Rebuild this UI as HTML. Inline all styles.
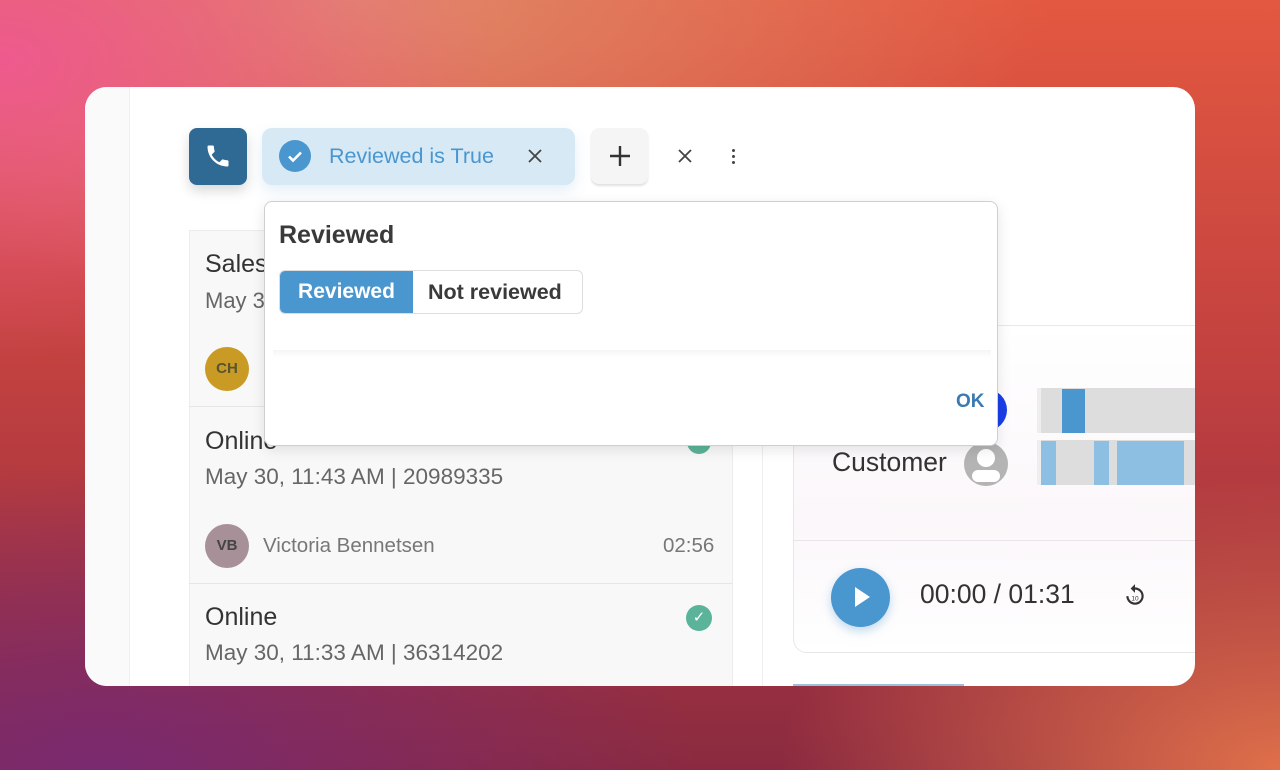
<!DOCTYPE html>
<html><head><style>
*{margin:0;padding:0;box-sizing:border-box}
body{width:1280px;height:770px;overflow:hidden;font-family:"Liberation Sans",sans-serif;position:relative;
background:radial-gradient(ellipse 500px 300px at 0px 60px,#ee5a8e 0%,rgba(238,90,142,0) 100%),
radial-gradient(ellipse 700px 300px at 350px 0px,#e08a6a 0%,rgba(224,138,106,0) 100%),
radial-gradient(ellipse 600px 300px at 100px 770px,#7a2a70 0%,rgba(122,42,112,0) 100%),
radial-gradient(ellipse 500px 300px at 1280px 770px,#e0704a 0%,rgba(224,112,74,0) 100%),
linear-gradient(180deg,#e35840 0%,#c04040 50%,#8a2a40 100%);}
.a{position:absolute}
.card{left:85px;top:87px;width:1110px;height:599px;background:#fff;border-radius:22px;overflow:hidden}
.t{color:#444;white-space:nowrap}
</style></head><body>
<div class="a card">
  <div class="a" style="left:0;top:0;width:45px;height:599px;background:#fafafa;border-right:1px solid #f0f0f0"></div>
  <div class="a" style="left:104px;top:143px;width:544px;height:460px;background:#f8f8f8;border:1px solid #ececec"></div>
  <div class="a" style="left:104px;top:319px;width:544px;height:1px;background:#e6e6e6"></div>
  <div class="a" style="left:104px;top:496px;width:544px;height:1px;background:#e6e6e6"></div>
  <div class="a t" style="left:120px;top:163px;font-size:25px;color:#333">Sales</div>
  <div class="a t" style="left:120px;top:201px;font-size:22px;color:#666">May 3</div>
  <div class="a" style="left:120px;top:260px;width:44px;height:44px;border-radius:50%;background:#c99a24;color:#553;font-size:15px;font-weight:bold;text-align:center;line-height:44px">CH</div>
  <div class="a t" style="left:120px;top:340px;font-size:25px;color:#333">Online</div>
  <div class="a" style="left:602px;top:343px;width:24px;height:24px;border-radius:50%;background:#5bb39a"></div>
  <div class="a t" style="left:120px;top:377px;font-size:22.5px;color:#666">May 30, 11:43 AM | 20989335</div>
  <div class="a" style="left:120px;top:437px;width:44px;height:44px;border-radius:50%;background:#a89098;color:#444;font-size:15px;font-weight:bold;text-align:center;line-height:44px">VB</div>
  <div class="a t" style="left:178px;top:447px;font-size:20.5px;color:#777">Victoria Bennetsen</div>
  <div class="a t" style="left:578px;top:447px;font-size:20.5px;color:#777">02:56</div>
  <div class="a t" style="left:120px;top:516px;font-size:25px;color:#333">Online</div>
  <div class="a" style="left:601px;top:518px;width:26px;height:26px;border-radius:50%;background:#5bb39a;color:#fff;font-size:15px;text-align:center;line-height:26px">✓</div>
  <div class="a t" style="left:120px;top:553px;font-size:22.5px;color:#666">May 30, 11:33 AM | 36314202</div>
  <div class="a" style="left:677px;top:143px;width:1px;height:460px;background:#eee"></div>
  <div class="a" style="left:708px;top:238px;width:420px;height:328px;border:1px solid #e8e8e8;border-radius:14px;background:linear-gradient(180deg,#fff 0%,#fbf7fa 60%,#fff 100%)"></div>
  <div class="a" style="left:708px;top:453px;width:420px;height:1px;background:#e6e6e6"></div>
  <div class="a" style="left:880px;top:302px;width:42px;height:42px;border-radius:50%;background:#1a3ee8"></div>
  <div class="a t" style="left:747px;top:360px;font-size:26.5px;color:#333">Customer</div>
  <div class="a" style="left:879px;top:355px;width:44px;height:44px;border-radius:50%;background:#b4b4b4;overflow:hidden">
    <div class="a" style="left:13px;top:7px;width:18px;height:18px;border-radius:50%;background:#fff"></div>
    <div class="a" style="left:8px;top:28px;width:28px;height:12px;border-radius:7px;background:#fff"></div>
  </div>
  <div class="a" style="left:952px;top:301px;width:160px;height:45px;background:#ddd;border-left:4px solid #eee"></div>
  <div class="a" style="left:977px;top:302px;width:23px;height:44px;background:#4a96cf"></div>
  <div class="a" style="left:952px;top:353px;width:160px;height:45px;background:#ddd;border-left:4px solid #eee"></div>
  <div class="a" style="left:956px;top:354px;width:15px;height:44px;background:#8dbfe3"></div>
  <div class="a" style="left:1009px;top:354px;width:15px;height:44px;background:#8dbfe3"></div>
  <div class="a" style="left:1032px;top:354px;width:67px;height:44px;background:#8dbfe3"></div>
  <div class="a" style="left:746px;top:481px;width:59px;height:59px;border-radius:50%;background:#4a96cf;box-shadow:0 4px 10px rgba(74,150,207,.35)">
    <div class="a" style="left:24px;top:19px;width:0;height:0;border-left:15px solid #fff;border-top:10px solid transparent;border-bottom:10px solid transparent"></div>
  </div>
  <div class="a t" style="left:835px;top:492px;font-size:26.5px;color:#333">00:00 / 01:31</div>
  <svg class="a" style="left:1037px;top:495px" width="26" height="26" viewBox="0 0 24 24"><path d="M12 5V2L8 6l4 4V7a6 6 0 1 1-6 6H4a8 8 0 1 0 8-8z" fill="#333"/><text x="12" y="17" font-size="6" text-anchor="middle" fill="#333" font-family="Liberation Sans">10</text></svg>
  <div class="a" style="left:708px;top:597px;width:171px;height:3px;background:#9ac0dc"></div>
  <div class="a" style="left:104px;top:41px;width:58px;height:57px;background:#2f6a95;border-radius:8px;box-shadow:0 6px 12px rgba(0,0,0,.15)">
    <svg class="a" style="left:15px;top:14px" width="28" height="28" viewBox="0 0 24 24"><path d="M6.6 10.8c1.4 2.8 3.8 5.1 6.6 6.6l2.2-2.2c.3-.3.7-.4 1-.2 1.1.4 2.3.6 3.6.6.6 0 1 .4 1 1V20c0 .6-.4 1-1 1C10.6 21 3 13.4 3 4c0-.6.4-1 1-1h3.5c.6 0 1 .4 1 1 0 1.3.2 2.5.6 3.6.1.3 0 .7-.2 1L6.6 10.8z" fill="#fff"/></svg>
  </div>
  <div class="a" style="left:177px;top:41px;width:313px;height:57px;background:#d6e9f5;border-radius:10px;box-shadow:0 6px 14px rgba(74,150,207,.15)">
    <div class="a" style="left:17px;top:12px;width:32px;height:32px;border-radius:50%;background:#4a96cf">
      <svg class="a" style="left:6px;top:6px" width="20" height="20" viewBox="0 0 20 20"><path d="M4 10.5l4 4 8-8" stroke="#fff" stroke-width="2.6" fill="none"/></svg>
    </div>
    <div class="a t" style="left:67px;top:16px;font-size:21.5px;color:#4a96cf">Reviewed is True</div>
    <svg class="a" style="left:265px;top:20px" width="16" height="16" viewBox="0 0 16 16"><path d="M2 2l12 12M14 2L2 14" stroke="#444" stroke-width="1.8"/></svg>
  </div>
  <div class="a" style="left:506px;top:41px;width:57px;height:56px;background:#f5f5f5;border-radius:8px;box-shadow:0 2px 2px rgba(0,0,0,.12)">
    <svg class="a" style="left:18px;top:17px" width="22" height="22" viewBox="0 0 22 22"><path d="M11 1v20M1 11h20" stroke="#333" stroke-width="2.4"/></svg>
  </div>
  <svg class="a" style="left:592px;top:61px" width="16" height="16" viewBox="0 0 16 16"><path d="M2 2l12 12M14 2L2 14" stroke="#444" stroke-width="1.8"/></svg>
  <div class="a" style="left:646.5px;top:62px;width:3px;height:3px;border-radius:50%;background:#444;box-shadow:0 6px 0 #444,0 12px 0 #444"></div>
  <div class="a" style="left:179px;top:114px;width:734px;height:245px;background:#fff;border:1px solid #cfcfcf;border-radius:8px;box-shadow:0 4px 14px rgba(0,0,0,.1)">
    <div class="a t" style="left:14px;top:19px;font-size:25px;font-weight:bold;color:#3a3a3a">Reviewed</div>
    <div class="a" style="left:14px;top:68px;width:304px;height:44px;border:1px solid #ddd;border-radius:6px;overflow:hidden">
      <div class="a" style="left:0;top:0;width:133px;height:44px;background:#4a96cf;color:#fff;font-size:21px;font-weight:bold;text-align:center;line-height:42px">Reviewed</div>
      <div class="a t" style="left:148px;top:0;font-size:21.5px;font-weight:bold;color:#3a3a3a;line-height:42px">Not reviewed</div>
    </div>
    <div class="a" style="left:8px;top:148px;width:718px;height:8px;background:linear-gradient(180deg,#f5f5f5,#fff)"></div>
    <div class="a t" style="left:691px;top:189px;font-size:19px;font-weight:bold;color:#3a7ab0">OK</div>
  </div>
</div>
</body></html>
